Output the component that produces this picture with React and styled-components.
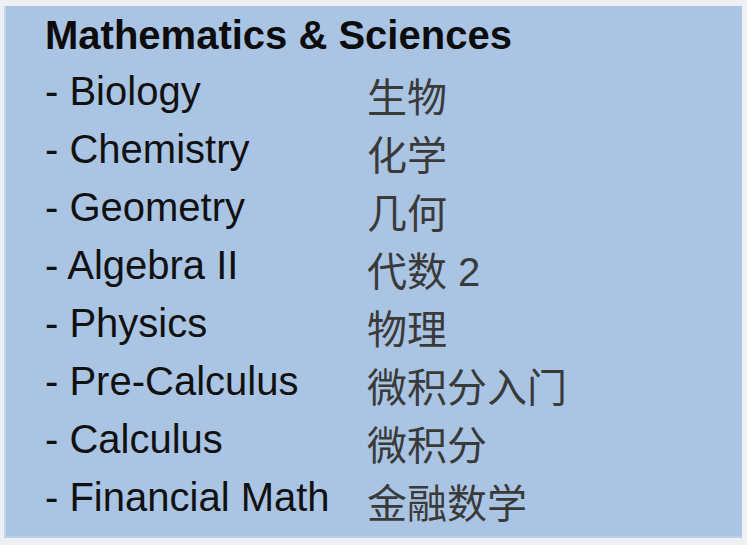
import React from 'react'
import styled, { createGlobalStyle } from 'styled-components'

const GlobalStyle = createGlobalStyle`
  html, body {
    margin: 0;
    padding: 0;
    background: #eff0f3;
  }
  body {
    font-family: 'Liberation Sans', Arial, 'Noto Sans CJK SC', sans-serif;
  }
`

const Page = styled.div`
  width: 747px;
  height: 545px;
  padding: 6px 5px 7px 4px;
  box-sizing: border-box;
`

const Card = styled.div`
  height: 100%;
  box-sizing: border-box;
  background: #aac5e3;
  border-left: 2px solid #c3d5ea;
  border-bottom: 2px solid #b9cfe8;
  padding: 2px 0 0 39px;
`

const Heading = styled.h1`
  margin: 0;
  font-size: 40px;
  line-height: 54px;
  font-weight: bold;
  color: #0c0c0c;
`

const List = styled.div`
  display: grid;
  grid-template-columns: 322px 1fr;
`

const Subject = styled.div`
  font-size: 40px;
  line-height: 58px;
  color: #111;
  white-space: nowrap;
`

// the chinese names sit a little lower than the english ones
const Translation = styled(Subject)`
  box-sizing: border-box;
  height: 58px;
  padding-top: 7px;
  color: #3a3a3a;
  font-family: 'Liberation Sans', 'Noto Sans CJK SC', sans-serif;
`

const subjects = [
  ['Biology', '生物'],
  ['Chemistry', '化学'],
  ['Geometry', '几何'],
  ['Algebra II', '代数 2'],
  ['Physics', '物理'],
  ['Pre-Calculus', '微积分入门'],
  ['Calculus', '微积分'],
  ['Financial Math', '金融数学'],
]

const App = () => (
  <Page>
    <GlobalStyle />
    <Card>
      <Heading>Mathematics &amp; Sciences</Heading>
      <List>
        {subjects.map(([en, zh]) => (
          <React.Fragment key={en}>
            <Subject>- {en}</Subject>
            <Translation>{zh}</Translation>
          </React.Fragment>
        ))}
      </List>
    </Card>
  </Page>
)

export default App
